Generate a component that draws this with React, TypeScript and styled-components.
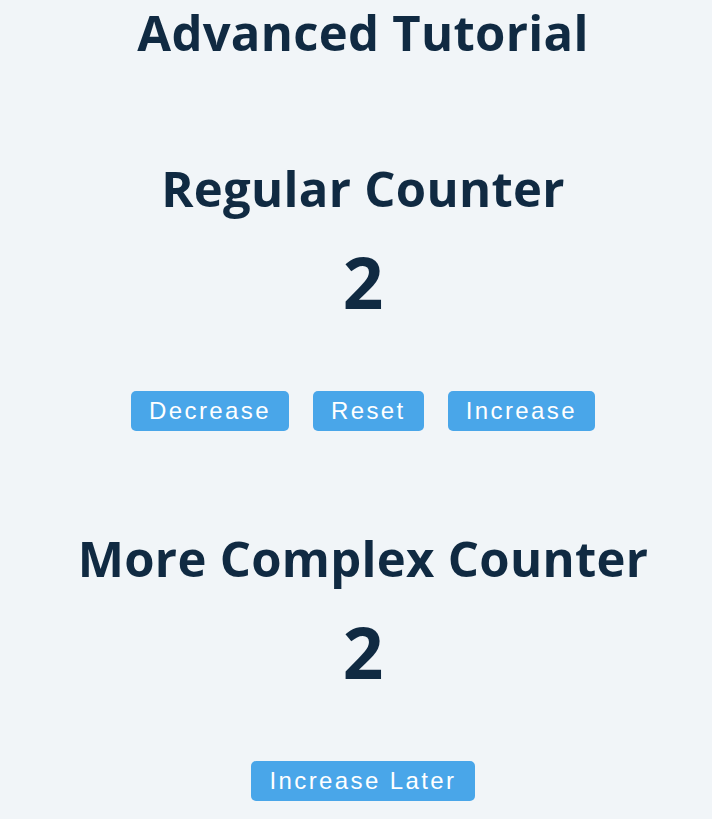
import React, { useState } from "react";
import styled, { createGlobalStyle } from "styled-components";

const GlobalStyle = createGlobalStyle`
  html, body {
    margin: 0;
    padding: 0;
    background: #f1f5f8;
    color: #102a42;
  }
  body {
    font-family: "Open Sans", "Noto Sans", sans-serif;
  }
`;

const Page = styled.main`
  text-align: center;
  padding: 4px 0 0 14px;
`;

const Title = styled.h1`
  margin: 0;
  font-family: "Open Sans", "Noto Sans", sans-serif;
  font-weight: 700;
  font-size: 49px;
  line-height: 57px;
  letter-spacing: 0.3px;
  color: #102a42;
`;

const Section = styled.section`
  margin-top: 97px;
  display: flex;
  flex-direction: column;
  align-items: center;
`;

const Heading = styled.h2`
  margin: 0;
  font-family: "Open Sans", "Noto Sans", sans-serif;
  font-weight: 700;
  font-size: 49px;
  line-height: 60px;
  letter-spacing: 0.3px;
  color: #102a42;
`;

const Count = styled.span`
  display: block;
  margin-top: 24px;
  font-family: "Open Sans", "Noto Sans", sans-serif;
  font-weight: 700;
  font-size: 71px;
  line-height: 80px;
  color: #102a42;
`;

const ButtonRow = styled.div`
  margin-top: 69px;
  display: flex;
  justify-content: center;
  gap: 24px;
`;

const Button = styled.button`
  font-family: "Liberation Sans", Arial, sans-serif;
  font-size: 24px;
  line-height: 28px;
  letter-spacing: 2.4px;
  padding: 6px 18px;
  height: 40px;
  border: none;
  border-radius: 5px;
  background: #49a6e9;
  color: #ffffff;
  cursor: pointer;
`;

export default function App() {
  const [value, setValue] = useState(2);
  const [complex, setComplex] = useState(2);

  return (
    <Page>
      <GlobalStyle />
      <Title>Advanced Tutorial</Title>
      <Section>
        <Heading>Regular Counter</Heading>
        <Count>{value}</Count>
        <ButtonRow>
          <Button onClick={() => setValue(value - 1)}>Decrease</Button>
          <Button onClick={() => setValue(0)}>Reset</Button>
          <Button onClick={() => setValue(value + 1)}>Increase</Button>
        </ButtonRow>
      </Section>
      <Section>
        <Heading>More Complex Counter</Heading>
        <Count>{complex}</Count>
        <ButtonRow>
          <Button
            onClick={() => setTimeout(() => setComplex((c) => c + 1), 2000)}
          >
            Increase Later
          </Button>
        </ButtonRow>
      </Section>
    </Page>
  );
}
